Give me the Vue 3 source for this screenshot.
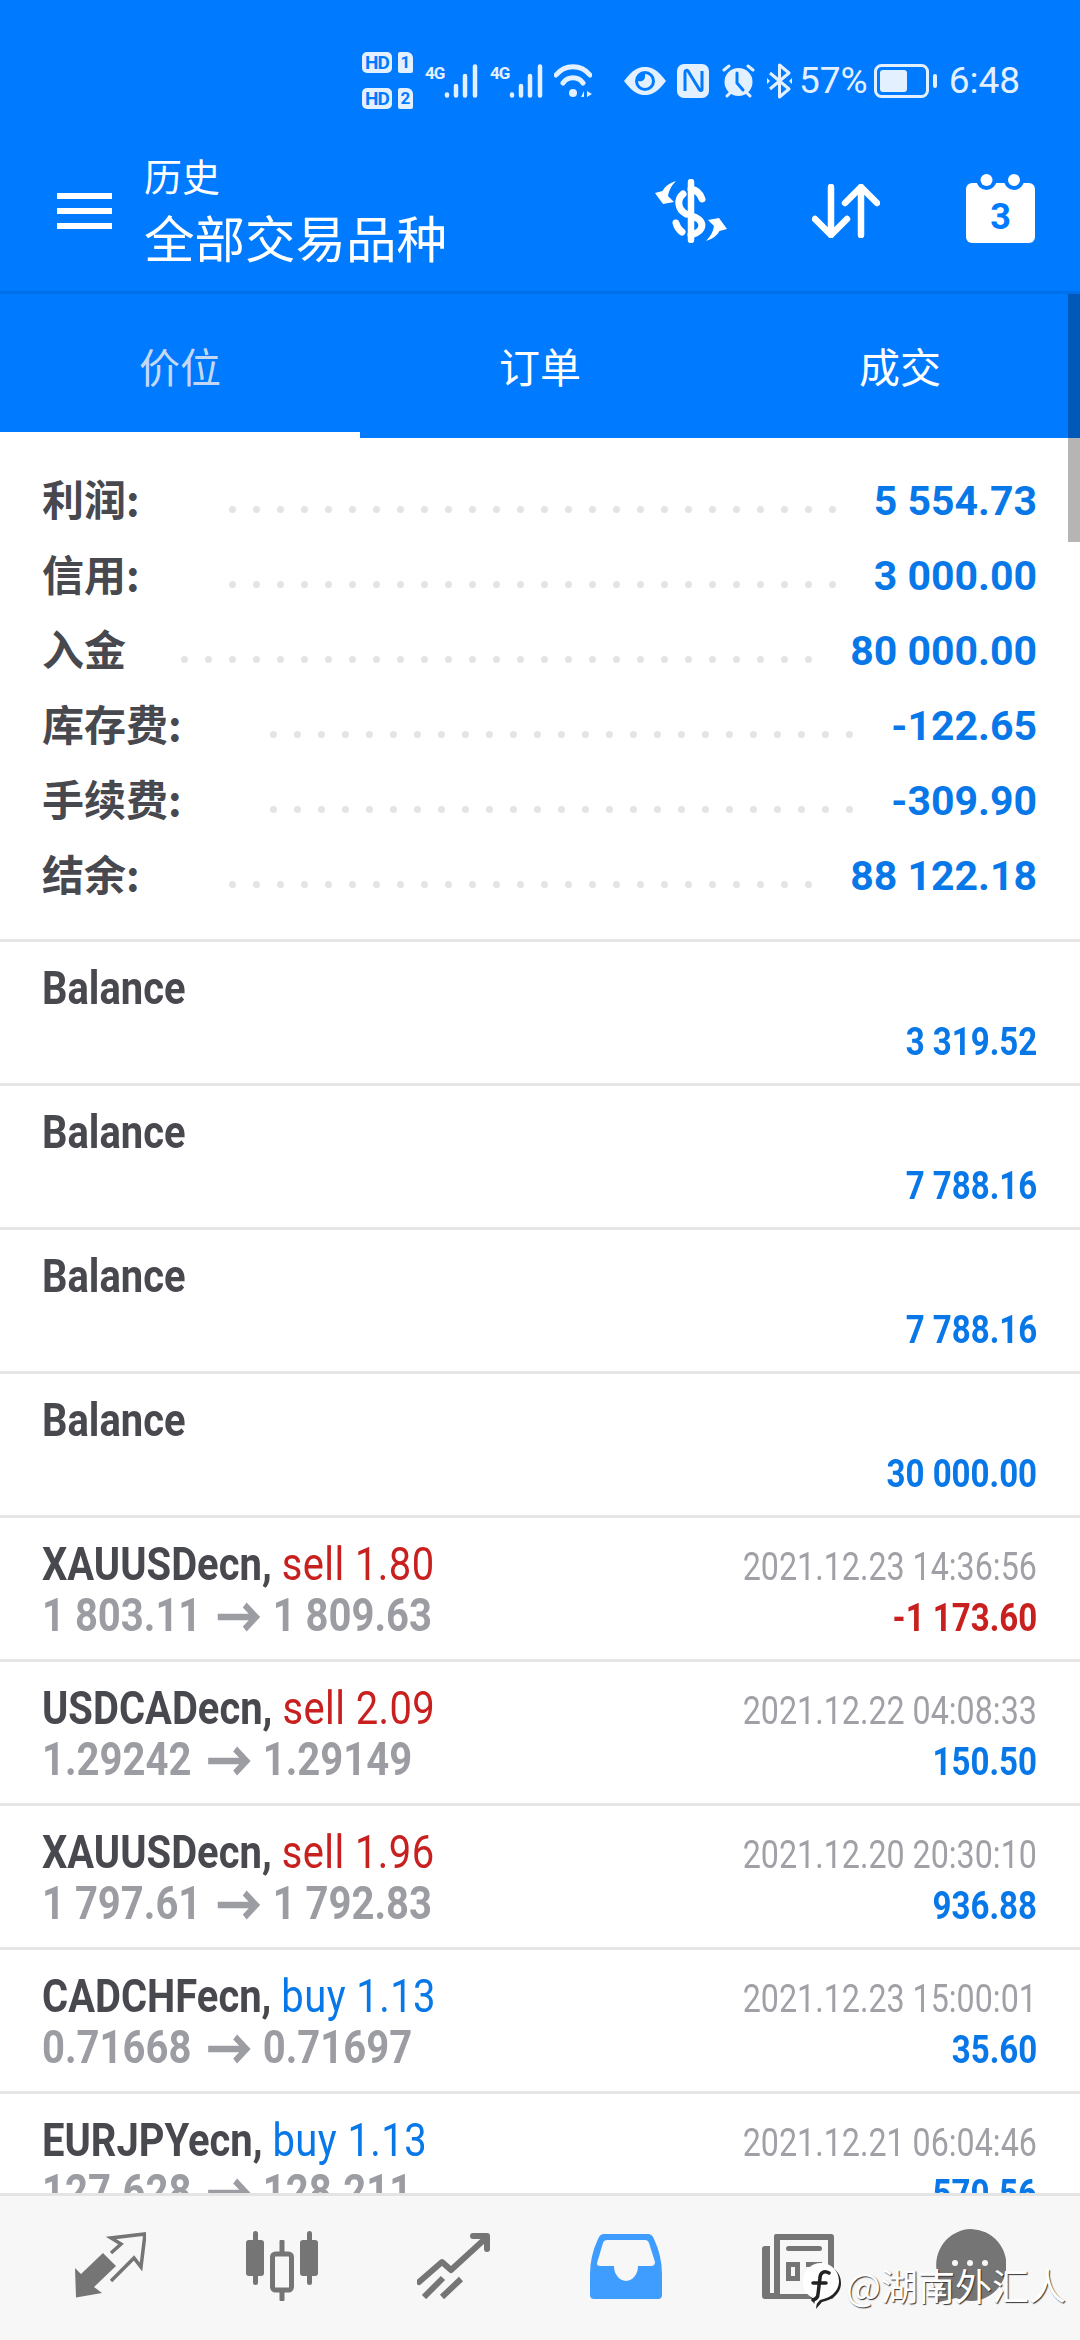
<script setup>
const summary = [
  { label: '利润:', value: '5 554.73', dots: 26 },
  { label: '信用:', value: '3 000.00', dots: 26 },
  { label: '入金', value: '80 000.00', dots: 27 },
  { label: '库存费:', value: '-122.65', dots: 25 },
  { label: '手续费:', value: '-309.90', dots: 25 },
  { label: '结余:', value: '88 122.18', dots: 25 },
]

const balances = ['3 319.52', '7 788.16', '7 788.16', '30 000.00']

const deals = [
  { symbol: 'XAUUSDecn,', side: 'sell 1.80', from: '1 803.11', to: '1 809.63', date: '2021.12.23 14:36:56', profit: '-1 173.60' },
  { symbol: 'USDCADecn,', side: 'sell 2.09', from: '1.29242', to: '1.29149', date: '2021.12.22 04:08:33', profit: '150.50' },
  { symbol: 'XAUUSDecn,', side: 'sell 1.96', from: '1 797.61', to: '1 792.83', date: '2021.12.20 20:30:10', profit: '936.88' },
  { symbol: 'CADCHFecn,', side: 'buy 1.13', from: '0.71668', to: '0.71697', date: '2021.12.23 15:00:01', profit: '35.60' },
  { symbol: 'EURJPYecn,', side: 'buy 1.13', from: '127.628', to: '128.211', date: '2021.12.21 06:04:46', profit: '570.56' },
]

const isSell = (deal) => deal.side.startsWith('sell')
const isLoss = (deal) => deal.profit.startsWith('-')
</script>

<template>
  <div class="app">
    <div class="head">
      <div class="status">
        <div class="hd-grid">
          <span class="hd-box">HD</span><span class="sim-box">1</span>
          <span class="hd-box">HD</span><span class="sim-box">2</span>
        </div>
        <div v-for="n in 2" :key="n" class="st-sig">
          <span class="st-4g">4G</span>
          <svg width="34" height="34" viewBox="0 0 34 34">
            <g stroke="#e3f0ff" stroke-width="4.500" stroke-linecap="round">
              <path d="M3 30.500v1M12 22v9.500M21 12v19.500M31 2.500v29" />
            </g>
          </svg>
        </div>
        <svg class="st-wifi" width="38" height="34" viewBox="0 0 38 34" fill="none" stroke="#e3f0ff" stroke-linecap="round">
          <path d="M2 11C11 0 27 0 36 11" stroke-width="5" />
          <path d="M9 19C14 12 24 12 29 19" stroke-width="5" />
          <circle cx="19" cy="29" r="4" fill="#e3f0ff" stroke="none" />
          <path d="M27 33l3-6v6zM33 27l5 3-5 3z" fill="#e3f0ff" stroke="none" />
        </svg>
        <svg class="st-eye" width="42" height="28" viewBox="0 0 42 28">
          <path d="M0 14C9 2 15 0 21 0s12 2 21 14c-9 12-15 14-21 14S9 26 0 14z" fill="#e3f0ff" />
          <circle cx="21" cy="14" r="10" fill="#007aff" />
          <path d="M21 7a7 7 0 1 1-7 7c3 1 8 0 7-7z" fill="#e3f0ff" />
        </svg>
        <svg class="st-nfc" width="32" height="34" viewBox="0 0 32 34">
          <rect width="32" height="34" rx="7" fill="#e3f0ff" />
          <path d="M8 27V8c0-2 2-2 3-1l11 18c1 2 3 2 3 0V7" fill="none" stroke="#007aff" stroke-width="3" />
        </svg>
        <svg class="st-alarm" width="35" height="34" viewBox="0 0 35 34" fill="none" stroke="#e3f0ff" stroke-linecap="round">
          <circle cx="17.500" cy="18" r="14" fill="#e3f0ff" stroke="none" />
          <path d="M3 6l5-4M32 6l-5-4M6 32l3-3M29 32l-3-3" stroke-width="3" />
          <path d="M16 9v10l6 7" stroke="#007aff" stroke-width="3" />
        </svg>
        <svg class="st-bt" width="25" height="36" viewBox="0 0 25 36" fill="none" stroke="#e3f0ff" stroke-width="3" stroke-linejoin="round">
          <path d="M3 10l19 16-9.500 8V2L22 10 3 26" />
          <path d="M0 15l3 3-3 3zM25 15l-3 3 3 3z" fill="#e3f0ff" stroke="none" />
        </svg>
        <span class="st-text st-pct">57%</span>
        <svg class="st-bat" width="63" height="34" viewBox="0 0 63 34">
          <rect x="1.500" y="1.500" width="52" height="31" rx="6" fill="none" stroke="#e3f0ff" stroke-width="3" />
          <rect x="6" y="6" width="27" height="22" rx="3" fill="#e3f0ff" />
          <rect x="59" y="10" width="4" height="14" rx="2" fill="#e3f0ff" />
        </svg>
        <span class="st-text st-time">6:48</span>
      </div>

      <div class="toolbar">
        <div class="burger"><i></i><i></i><i></i></div>
        <div class="titles">
          <div class="title-sm">历史</div>
          <div class="title-lg">全部交易品种</div>
        </div>
        <svg class="tb-dollar" width="74" height="64" viewBox="0 0 74 64">
          <g fill="none" stroke="#fff" stroke-linecap="round">
            <path d="M37 3v58" stroke-width="6.500" />
            <path d="M48 20C46 14 43 11 37 10M29 15C23 20 23 30 32 35M37 37C51 40 52 52 37 56M22 44C23 48 25 51 28 53" stroke-width="7" />
          </g>
          <path d="M22 2Q12 5 8.500 12L1 14 9 25 20 23 14 17Q15 9 22 2Z" fill="#fff" />
          <path d="M52 62Q62 59 65.500 52L73 50 65 39 54 41 60 47Q59 55 52 62Z" fill="#fff" />
        </svg>
        <svg class="tb-arrows" width="68" height="54" viewBox="0 0 68 54" fill="none" stroke="#fff" stroke-width="6.500" stroke-linecap="round" stroke-linejoin="round">
          <path d="M19 3v48M3 35l16 16 16-16" />
          <path d="M49 51V3M33 19L49 3l16 16" />
        </svg>
        <svg class="tb-cal" width="69" height="69" viewBox="0 0 69 69">
          <rect x="0" y="9" width="69" height="60" rx="6" fill="#fff" />
          <circle cx="20.500" cy="6" r="10" fill="#007aff" />
          <circle cx="48" cy="6" r="10" fill="#007aff" />
          <circle cx="20.500" cy="6" r="6" fill="#fff" />
          <circle cx="48" cy="6" r="6" fill="#fff" />
          <text x="34.500" y="55" text-anchor="middle" class="cal-num">3</text>
        </svg>
      </div>

      <div class="tabs">
        <div class="tab tab-on">价位</div>
        <div class="tab">订单</div>
        <div class="tab">成交</div>
      </div>
    </div>

    <div class="scroll">
      <div class="summary">
        <div v-for="s in summary" :key="s.label" class="sum-row">
          <span class="sum-label">{{ s.label }}</span>
          <span class="dots"><i v-for="d in s.dots" :key="d"></i></span>
          <span class="sum-value">{{ s.value }}</span>
        </div>
      </div>

      <div v-for="(b, i) in balances" :key="i" class="row">
        <div class="line">
          <span class="cond name">Balance</span>
        </div>
        <div class="line line-end">
          <span class="cond cond-r amount bal-amount">{{ b }}</span>
        </div>
      </div>

      <div v-for="d in deals" :key="d.date" class="row">
        <div class="line">
          <span class="cond name">{{ d.symbol }} <span class="side" :class="isSell(d) ? 'red' : 'blue'">{{ d.side }}</span></span>
          <span class="cond cond-r date">{{ d.date }}</span>
        </div>
        <div class="line">
          <span class="cond price">{{ d.from }}<svg class="price-arrow" width="50" height="30" viewBox="0 0 50 30" fill="none" stroke="#9c9da3" stroke-width="6.500"><path d="M1 15H46M32 3l13 12-13 12" /></svg>{{ d.to }}</span>
          <span class="cond cond-r amount deal-amount" :class="isLoss(d) ? 'red' : 'blue'">{{ d.profit }}</span>
        </div>
      </div>
    </div>

    <div class="nav">
      <div class="nav-item">
        <svg width="72" height="68" viewBox="0 0 72 68">
          <path d="M1 36l6 6 22-21 13 13-22 21 8 6-26 4.500z" fill="#757575" />
          <path d="M37 21l10-9-10-6 34-4-4 33-7-9-23 23" fill="none" stroke="#757575" stroke-width="3.500" />
        </svg>
      </div>
      <div class="nav-item">
        <svg width="74" height="70" viewBox="0 0 74 70" fill="#757575">
          <rect x="8" y="0" width="5" height="54" rx="2.500" />
          <rect x="1" y="9" width="18" height="36" rx="3" />
          <rect x="34.500" y="9" width="5" height="61" rx="1" />
          <rect x="27.500" y="23" width="19" height="36" rx="3" fill="#f7f7f7" stroke="#757575" stroke-width="5" />
          <rect x="62" y="0" width="5" height="54" rx="2.500" />
          <rect x="55" y="9" width="18" height="36" rx="3" />
        </svg>
      </div>
      <div class="nav-item">
        <svg width="74" height="66" viewBox="0 0 74 66" fill="none" stroke="#757575" stroke-width="6" stroke-linecap="round" stroke-linejoin="round">
          <path d="M2 49l23-20 9 8L69 5" />
          <path d="M56 3h14v13" />
          <path d="M7 64l19-19M25 64l19-18" stroke-linecap="butt" />
        </svg>
      </div>
      <div class="nav-item">
        <svg width="72" height="65" viewBox="0 0 72 65">
          <path fill-rule="evenodd" fill="#3f9dff" d="M14 0H58Q62 0 64 5Q72 22 72 40V61Q72 65 68 65H4Q0 65 0 61V40Q0 22 8 5Q10 0 14 0ZM17 6Q14 6 13 9L7 29Q7 32 10 32H24A12 15 0 0 0 48 32H61Q65 32 65 28L59 9Q58 6 55 6Z" />
        </svg>
      </div>
      <div class="nav-item">
        <svg width="72" height="65" viewBox="0 0 72 65">
          <path fill="#757575" d="M14 0H69a3 3 0 0 1 3 3V62a3 3 0 0 1-3 3H3a3 3 0 0 1-3-3V15a3 3 0 0 1 3-3H8V59H12V2a2 2 0 0 1 2-2Z" />
          <rect x="18" y="6" width="48" height="54" fill="#f7f7f7" />
          <rect x="24" y="12" width="36" height="5" rx="2.500" fill="#757575" />
          <path fill="#757575" fill-rule="evenodd" d="M24 28H38V47H24ZM29 33V42H33V33Z" />
          <rect x="44" y="28" width="16" height="5" fill="#757575" />
        </svg>
      </div>
      <div class="nav-item">
        <svg width="72" height="74" viewBox="0 0 72 74">
          <path d="M36 0a36 36 0 1 1-14 69L1 74q9-9 8-17A36 36 0 0 1 36 0z" fill="#757575" />
          <circle cx="21" cy="34" r="3" fill="#f7f7f7" />
          <circle cx="36" cy="34" r="3" fill="#f7f7f7" />
          <circle cx="51" cy="34" r="3" fill="#f7f7f7" />
        </svg>
      </div>
    </div>

    <div class="bar bar-dark"></div>
    <div class="bar bar-gray"></div>

    <div class="mark">
      <svg class="mark-logo" width="38" height="46" viewBox="0 0 38 46">
        <path d="M19 1a18 18 0 0 1 18 18c0 10-8 17-19 19l-6 7 1-8C5 34 1 28 1 19A18 18 0 0 1 19 1z" fill="#fff" />
        <path d="M27 11c-5-3-9 0-9 5l-2 16c0 3-2 5-5 6M11 21h13" fill="none" stroke="#222" stroke-width="3.500" stroke-linecap="round" />
      </svg>
      <span class="mark-text">@湖南外汇人</span>
    </div>
  </div>
</template>

<style scoped>
.app {
  width: 1080px;
  height: 2340px;
  position: relative;
  overflow: hidden;
  display: flex;
  flex-direction: column;
  background: #fff;
  font-family: Roboto, "Noto Sans CJK SC", sans-serif;
}
.head {
  background: #007aff;
  color: #fff;
  font-family: "Noto Sans CJK SC", sans-serif;
}
.status {
  height: 130px;
  padding: 31px 60px 0 0;
  box-sizing: border-box;
  display: flex;
  justify-content: flex-end;
  align-items: center;
}
.hd-grid {
  display: grid;
  grid-template-columns: 30px 15px;
  grid-auto-rows: 21px;
  column-gap: 6px;
  row-gap: 15px;
  font: 700 19px/21px Roboto, sans-serif;
  color: #007aff;
  text-align: center;
}
.hd-box {
  background: #e3f0ff;
  border-radius: 5px;
  letter-spacing: -1px;
}
.sim-box {
  background: #e3f0ff;
  border-radius: 2px 6px 2px 2px;
  font-size: 17px;
}
.st-sig {
  margin-left: 12px;
  display: flex;
  width: 53px;
  height: 34px;
}
.st-4g {
  width: 19px;
  font: 700 17px/18px Roboto, sans-serif;
  letter-spacing: -1px;
  color: #e3f0ff;
  white-space: nowrap;
}
.st-wifi { margin-left: 11px; }
.st-eye { margin-left: 32px; }
.st-nfc { margin-left: 11px; }
.st-alarm { margin-left: 12px; }
.st-bt { margin-left: 11px; }
.st-text {
  font: 400 37px Roboto, sans-serif;
  color: #e3f0ff;
}
.st-pct { margin-left: 7px; }
.st-bat { margin-left: 6px; }
.st-time { margin-left: 12px; }

.toolbar {
  height: 164px;
  border-bottom: 3px solid #0070ea;
  box-sizing: border-box;
  display: flex;
  align-items: center;
}
.burger {
  width: 55px;
  margin-left: 57px;
  display: flex;
  flex-direction: column;
  gap: 9px;
}
.burger i {
  display: block;
  height: 6px;
  background: #fff;
}
.titles {
  margin-left: 32px;
  flex: 1;
}
.title-sm {
  font-size: 38px;
  line-height: 50px;
}
.title-lg {
  font-size: 50.500px;
  line-height: 72px;
}
.tb-dollar { margin-right: 84px; }
.tb-arrows { margin-right: 86px; }
.tb-cal { margin-right: 45px; margin-top: -4px; }
.cal-num {
  font: 700 36px Roboto, sans-serif;
  fill: #007aff;
}
.tabs {
  height: 144px;
  display: flex;
}
.tab {
  flex: 1;
  display: flex;
  align-items: center;
  justify-content: center;
  font-size: 41px;
  padding-bottom: 3px;
}
.tab-on {
  color: #c4d8f4;
  border-bottom: 6px solid #fff;
  padding: 3px 0 0;
  box-sizing: border-box;
}

.scroll {
  flex: 1;
  min-height: 0;
  overflow: hidden;
}
.summary {
  padding: 27px 43px 24px 42px;
  border-bottom: 3px solid #e6e6e6;
}
.sum-row {
  height: 75px;
  display: flex;
  align-items: center;
  white-space: nowrap;
}
.sum-label {
  font: 700 42px "Noto Sans CJK SC", sans-serif;
  color: #48484f;
  margin-right: auto;
  margin-top: -10px;
}
.dots {
  display: flex;
  gap: 17px;
  margin-top: 14px;
  margin-right: 38px;
}
.dots i {
  width: 7px;
  height: 7px;
  border-radius: 50%;
  background: #e4e4e4;
}
.sum-value {
  font: 700 41px Roboto, sans-serif;
  color: #0878e8;
  margin-top: -3px;
}

.row {
  height: 144px;
  padding: 20px 43px 0 42px;
  box-sizing: border-box;
  border-bottom: 3px solid #e6e6e6;
}
.line {
  height: 51px;
  display: flex;
  align-items: center;
  justify-content: space-between;
  white-space: nowrap;
}
.line-end {
  justify-content: flex-end;
}
.cond {
  display: inline-block;
  line-height: 1;
  transform-origin: left center;
}
.cond-r {
  transform-origin: right center;
}
.name {
  font-size: 47px;
  font-weight: 700;
  color: #48484f;
  transform: scaleX(0.85);
}
.side {
  font-weight: 400;
  letter-spacing: 0.5px;
}
.price {
  font-size: 46px;
  font-weight: 700;
  color: #9c9da3;
  transform: scaleX(0.87);
  margin-top: 1px;
}
.price-arrow {
  margin: 0 14px 0 18px;
  vertical-align: -1px;
}
.date {
  font-size: 38px;
  color: #a0a0a6;
  transform: scaleX(0.848);
  margin-top: 6px;
}
.amount {
  font-size: 38px;
  font-weight: 700;
  transform: scaleX(0.87);
}
.deal-amount {
  margin-top: 6px;
}
.bal-amount {
  color: #0878e8;
  margin-top: 6px;
}
.red { color: #c8201f; }
.blue { color: #0878e8; }

.nav {
  height: 147px;
  flex: none;
  box-sizing: border-box;
  border-top: 3px solid #e4e4e4;
  background: #f7f7f7;
  padding: 0 24px 4px;
  display: grid;
  grid-template-columns: repeat(6, 172px);
  align-items: center;
  justify-items: center;
}
.nav-item {
  display: flex;
}

.bar {
  position: absolute;
  right: 0;
  width: 12px;
}
.bar-dark {
  top: 294px;
  height: 144px;
  background: #0058b8;
}
.bar-gray {
  top: 438px;
  height: 104px;
  background: #b5b5b5;
}

.mark {
  position: absolute;
  left: 802px;
  top: 2258px;
  display: flex;
  align-items: center;
  gap: 6px;
}
.mark-logo {
  filter: drop-shadow(2px 2px 0 #222);
}
.mark-text {
  font: 400 37px "Noto Sans CJK SC", sans-serif;
  color: #fff;
  text-shadow: 1px 1px 1px #333;
  white-space: nowrap;
}
</style>
